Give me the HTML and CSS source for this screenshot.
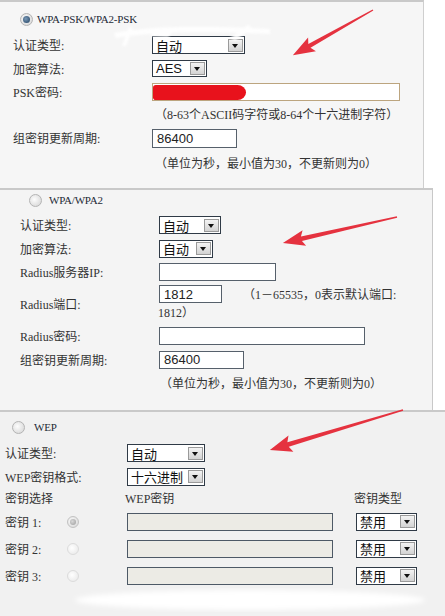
FILE: index.html
```html
<!DOCTYPE html>
<html lang="zh-CN">
<head>
  <meta charset="UTF-8">
  <title>无线安全设置</title>
  <link rel="stylesheet" href="styles.css">
</head>
<body>
<div class="page">

  <!-- WPA-PSK/WPA2-PSK -->
  <section class="panel psk">
    <div class="title"><span class="radio on"></span><span class="mode">WPA-PSK/WPA2-PSK</span></div>
    <div class="row r24 first">
      <label>认证类型:</label>
      <div class="sel w93"><span>自动</span><i></i></div>
    </div>
    <div class="row r23">
      <label>加密算法:</label>
      <div class="sel w55 h17"><span>AES</span><i></i></div>
    </div>
    <div class="row r24">
      <label>PSK密码:</label>
      <div class="inp w248 tan"><span class="blot"></span></div>
    </div>
    <div class="hint h20">（8-63个ASCII码字符或8-64个十六进制字符）</div>
    <div class="row r28">
      <label>组密钥更新周期:</label>
      <div class="inp w85 h19">86400</div>
    </div>
    <div class="hint h22">（单位为秒，最小值为30，不更新则为0）</div>
  </section>

  <!-- WPA/WPA2 -->
  <section class="panel wpa">
    <div class="title"><span class="radio"></span><span class="mode">WPA/WPA2</span></div>
    <div class="row r24 first">
      <label>认证类型:</label>
      <div class="sel w62"><span>自动</span><i></i></div>
    </div>
    <div class="row r23">
      <label>加密算法:</label>
      <div class="sel w54"><span>自动</span><i></i></div>
    </div>
    <div class="row r23">
      <label>Radius服务器IP:</label>
      <div class="inp w117"></div>
    </div>
    <div class="row r41">
      <label>Radius端口:</label>
      <div class="field">
        <div class="line">
          <div class="inp w63">1812</div>
          <span class="note">（1－65535，0表示默认端口:</span>
        </div>
        <div class="wrap">1812）</div>
      </div>
    </div>
    <div class="row r24">
      <label>Radius密码:</label>
      <div class="inp w206"></div>
    </div>
    <div class="row r23">
      <label>组密钥更新周期:</label>
      <div class="inp w85">86400</div>
    </div>
    <div class="hint h24">（单位为秒，最小值为30，不更新则为0）</div>
  </section>

  <!-- WEP -->
  <section class="panel wep">
    <div class="title"><span class="radio"></span><span class="mode">WEP</span></div>
    <div class="row r24 first">
      <label>认证类型:</label>
      <div class="sel w78"><span>自动</span><i></i></div>
    </div>
    <div class="row r23">
      <label>WEP密钥格式:</label>
      <div class="sel w78"><span>十六进制</span><i></i></div>
    </div>
    <div class="keys head">
      <span class="span2">密钥选择</span>
      <span class="shift">WEP密钥</span>
      <span class="shift">密钥类型</span>
    </div>
    <div class="keys">
      <span>密钥 1:</span>
      <span class="radio small picked"></span>
      <div class="inp w206 off"></div>
      <div class="sel w61"><span>禁用</span><i></i></div>
    </div>
    <div class="keys">
      <span>密钥 2:</span>
      <span class="radio small faint"></span>
      <div class="inp w206 off"></div>
      <div class="sel w61"><span>禁用</span><i></i></div>
    </div>
    <div class="keys">
      <span>密钥 3:</span>
      <span class="radio small faint"></span>
      <div class="inp w206 off"></div>
      <div class="sel w61"><span>禁用</span><i></i></div>
    </div>
  </section>

  <!-- arrows and scribbles drawn over the screenshot -->
  <svg class="marks" width="445" height="616" viewBox="0 0 445 616">
    <defs>
      <filter id="soft"><feGaussianBlur stdDeviation="2.5"/></filter>
      <filter id="haze"><feGaussianBlur stdDeviation="1"/></filter>
    </defs>
    <g fill="#fff" opacity="0.9" filter="url(#haze)">
      <path d="M114 33 C150 26 200 25 270 29 L270 34 C200 31 150 32 116 38 Z"/>
      <path d="M122 46 L129 27 L133 28 L126 46 Z"/>
      <path d="M150 36 L158 29 L175 30 L168 37 Z"/>
      <path d="M230 38 L248 25 L252 28 L235 41 Z"/>
    </g>
    <ellipse cx="250" cy="600" rx="175" ry="10" fill="#fff" filter="url(#soft)"/>
    <g fill="#e5323f">
      <polygon transform="translate(373 10) rotate(150.6)" points="0,-0.7 73,-2.2 70,-8 92,0 70,8 73,2.2 0,0.7"/>
      <polygon transform="translate(397 217) rotate(167.2)" points="0,-0.7 98,-2.3 95,-8 117,0 95,8 98,2.3 0,0.7"/>
      <polygon transform="translate(403 410) rotate(163.3)" points="0,-0.7 120,-2.4 117,-8.5 139,0 117,8.5 120,2.4 0,0.7"/>
    </g>
  </svg>
</div>
</body>
</html>
```

FILE: styles.css
```css
:root {
  --text: #333;
  --line: #c9c9c9;
  --box-border: #56606b;
  --sel-border: #2f3a46;
}

body {
  margin: 0;
  background: #fff;
  color: var(--text);
  font: 12px "Liberation Serif", "Noto Sans CJK SC", serif;
}

.page {
  position: relative;
  width: 445px;
  height: 616px;
  overflow: hidden;
}

.panel {
  box-sizing: border-box;
  border-top: 2px solid var(--line);
}

.psk {
  width: 424px;
  height: 188px;
  background: #f6f6f6;
  border-right: 1px solid #cfcfcf;
  padding-left: 13px;
  --label: 139px;
}

.wpa {
  width: 433px;
  height: 222px;
  background: #f4f4f4;
  border-right: 1px solid #c8c8c8;
  padding-left: 20px;
  --label: 139px;
}

.wep {
  width: 445px;
  height: 206px;
  background: #f1f1f1;
  padding-left: 5px;
  --label: 122px;
}

/* title line with radio */
.title {
  display: flex;
  align-items: center;
  height: 20px;
}

.psk .title { margin-top: 7px; padding-left: 7px; }
.wpa .title { padding-left: 9px; }
.wep .title { margin-top: 5px; padding-left: 7px; }

.mode {
  font-family: "Liberation Serif", serif;
  font-size: 11px;
  letter-spacing: -0.2px;
  color: #1e2a36;
  margin-left: 4px;
}

.wpa .mode { margin-left: 7px; }
.wep .mode { margin-left: 9px; }

/* label + field rows */
.row {
  display: flex;
  align-items: center;
}

.row.first { margin-top: 4px; }
.wpa .row.first { margin-top: 3px; }

.row label {
  width: var(--label);
  flex: none;
}

.r23 { height: 23px; }
.r24 { height: 24px; }
.r28 { height: 28px; }
.r41 { height: 41px; }

.hint {
  display: flex;
  align-items: center;
  padding-left: calc(var(--label) + 3px);
}

.wpa .hint { padding-left: calc(var(--label) + 1px); }

.h20 { height: 20px; }
.h22 { height: 22px; }
.h24 { height: 24px; }

/* port row with wrapping note */
.field {
  align-self: flex-start;
  display: flex;
  flex-direction: column;
}

.field .line {
  display: flex;
  align-items: center;
  height: 22px;
}

.note { margin-left: 21px; }

.field .wrap {
  height: 16px;
  line-height: 16px;
  margin-left: -1px;
}

/* text boxes */
.inp {
  box-sizing: border-box;
  display: flex;
  align-items: center;
  height: 18px;
  padding-left: 4px;
  background: #fff;
  border: 1px solid var(--box-border);
  font: 13px "Liberation Sans", "Noto Sans CJK SC", sans-serif;
  color: #222;
}

.inp.h19 { height: 19px; }

.inp.tan {
  border-color: #bca57f;
  padding-left: 0;
}

.inp.off {
  background: #ecebe5;
  border-color: #4d5966;
}

.blot {
  width: 93px;
  height: 15px;
  background: #e8121c;
  border-radius: 3px 9px 9px 3px / 3px 8px 8px 3px;
}

/* drop-down boxes */
.sel {
  box-sizing: border-box;
  display: flex;
  align-items: center;
  height: 18px;
  background: #fff;
  border: 1px solid var(--sel-border);
  font: 13px "Liberation Sans", "Noto Sans CJK SC", sans-serif;
  color: #111;
}

.sel.h17 { height: 17px; }

.sel span {
  flex: 1;
  padding-left: 3px;
  white-space: nowrap;
}

.sel i {
  position: relative;
  flex: none;
  width: 15px;
  height: 13px;
  margin-right: 1px;
  box-sizing: border-box;
  border: 1px solid #9a9a9a;
  background: linear-gradient(#f3f3f3, #d3d3d3);
}

.sel i::after {
  content: "";
  position: absolute;
  left: 3px;
  top: 4px;
  border-left: 3.5px solid transparent;
  border-right: 3.5px solid transparent;
  border-top: 4px solid #111;
}

.w54 { width: 54px; }
.w55 { width: 55px; }
.w61 { width: 61px; }
.w62 { width: 62px; }
.w63 { width: 63px; }
.w78 { width: 78px; }
.w85 { width: 85px; }
.w93 { width: 93px; }
.w117 { width: 117px; }
.w206 { width: 206px; }
.w248 { width: 248px; }

/* radios */
.radio {
  position: relative;
  display: inline-block;
  width: 13px;
  height: 13px;
  box-sizing: border-box;
  border-radius: 50%;
  border: 1px solid #b4b4b4;
  background: radial-gradient(circle at 40% 40%, #fdfdfd, #d2d2d2);
}

.radio.on::after,
.radio.picked::after {
  content: "";
  position: absolute;
  left: 2px;
  top: 2px;
  width: 7px;
  height: 7px;
  border-radius: 50%;
  background: radial-gradient(circle at 40% 40%, #7a9ab8, #1f3e5e);
}

.radio.small {
  width: 12px;
  height: 12px;
}

.radio.picked {
  border-color: #c2c2c2;
}

.radio.picked::after {
  width: 6px;
  height: 6px;
  background: radial-gradient(circle at 40% 40%, #d8d8d8, #9a9a9a);
}

.radio.faint {
  border-color: #dcdcdc;
  background: radial-gradient(circle at 40% 40%, #fff, #e6e6e6);
}

/* WEP key table */
.keys {
  display: grid;
  grid-template-columns: 62px 60px 229px auto;
  align-items: center;
  height: 27px;
}

.keys.head { height: 20px; }

.keys .span2 { grid-column: span 2; }
.keys .shift { margin-left: -2px; }

.marks {
  position: absolute;
  left: 0;
  top: 0;
  pointer-events: none;
}
```
